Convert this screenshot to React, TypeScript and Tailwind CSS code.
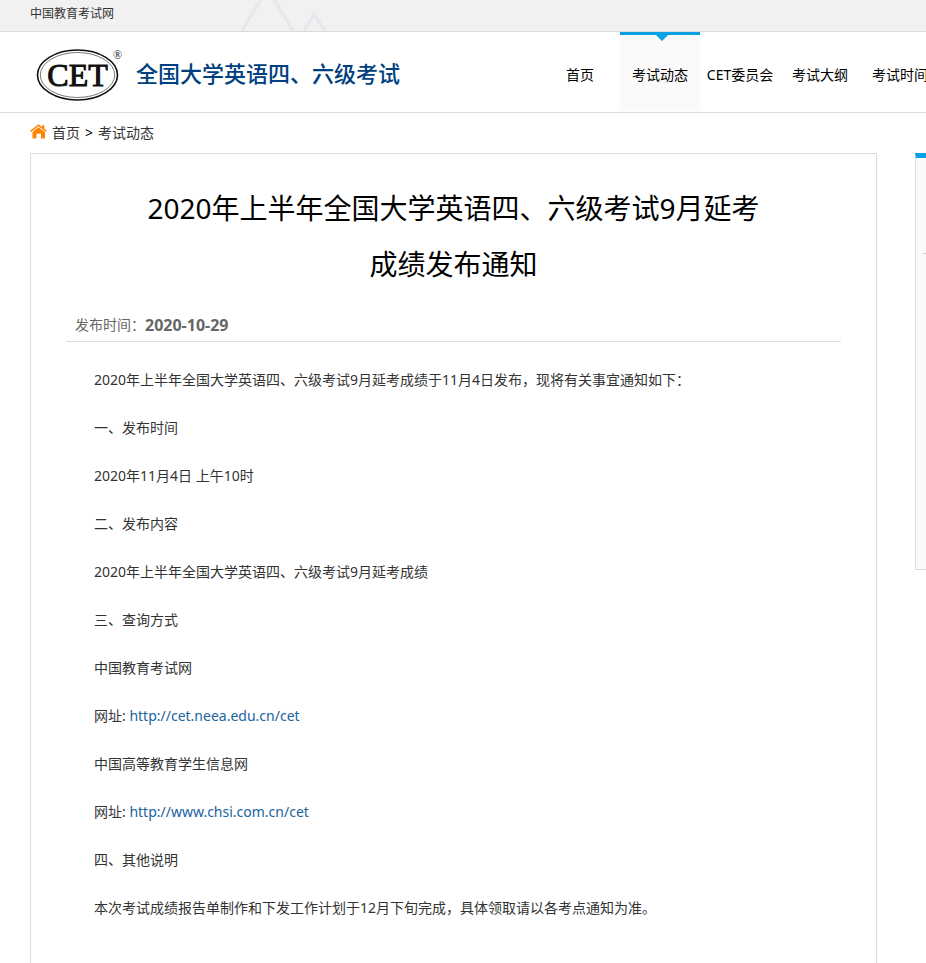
import clsx from 'clsx'

interface NavItem {
  label: string
  active?: boolean
}

interface Paragraph {
  text: string
  link?: string
}

const NAV_ITEMS: NavItem[] = [
  { label: '首页' },
  { label: '考试动态', active: true },
  { label: 'CET委员会' },
  { label: '考试大纲' },
  { label: '考试时间' },
]

const PARAGRAPHS: Paragraph[] = [
  {
    text: '2020年上半年全国大学英语四、六级考试9月延考成绩于11月4日发布，现将有关事宜通知如下：',
  },
  { text: '一、发布时间' },
  { text: '2020年11月4日 上午10时' },
  { text: '二、发布内容' },
  { text: '2020年上半年全国大学英语四、六级考试9月延考成绩' },
  { text: '三、查询方式' },
  { text: '中国教育考试网' },
  { text: '网址: ', link: 'http://cet.neea.edu.cn/cet' },
  { text: '中国高等教育学生信息网' },
  { text: '网址: ', link: 'http://www.chsi.com.cn/cet' },
  { text: '四、其他说明' },
  {
    text: '本次考试成绩报告单制作和下发工作计划于12月下旬完成，具体领取请以各考点通知为准。',
  },
]

function CetLogo() {
  return (
    <svg width="90" height="56" viewBox="0 0 90 56" role="img" aria-label="CET">
      <ellipse cx="41.5" cy="29" rx="40" ry="25" fill="#fff" stroke="#111" strokeWidth="1.6" />
      <ellipse cx="41.5" cy="29" rx="37.2" ry="22.5" fill="none" stroke="#555" strokeWidth="0.8" />
      <text
        x="41.5"
        y="39.5"
        textAnchor="middle"
        fontSize="32"
        fill="#111"
        stroke="#111"
        strokeWidth="1"
        className="font-['Liberation_Serif',serif]"
      >
        CET
      </text>
      <text
        x="81.5"
        y="13"
        textAnchor="middle"
        fontSize="12"
        fill="#222"
        className="font-['Liberation_Serif',serif]"
      >
        ®
      </text>
    </svg>
  )
}

function HomeIcon() {
  return (
    <svg width="17" height="18" viewBox="0 0 17 18" aria-hidden="true">
      <path d="M0.6 7.4 8.5 1.1 16.4 7.4" fill="none" stroke="#ff8400" strokeWidth="1.5" />
      <path d="M12 1.2h2.3v4L12 3.2z" fill="#ff8400" />
      <path d="M8.5 3.2 15 8.2v6.3h-4V9.7H6.5v4.8h-4V8z" fill="#ff8400" />
    </svg>
  )
}

function TopBar() {
  return (
    <div className="flex h-8 items-start border-b border-[#dcdcdc] bg-[#f1f1f1] pl-[30px]">
      <a href="#" className="w-[212px] text-xs leading-[27px]">
        中国教育考试网
      </a>
      <svg width="90" height="31" viewBox="0 0 90 31" aria-hidden="true">
        <path
          d="M0 31 19-1M32-1 51 31M62 31 72 14 83 31"
          fill="none"
          stroke="#e5e7ee"
          strokeWidth="3"
        />
      </svg>
    </div>
  )
}

function Header() {
  return (
    <header className="flex h-[81px] justify-between border-b border-[#dcdcdc] pl-9">
      <a href="#" className="flex shrink-0 items-center gap-[10px] pt-1">
        <CetLogo />
        <span className="text-[22px] font-medium text-[#003f80]">
          全国大学英语四、六级考试
        </span>
      </a>
      {/* The last item runs past the right edge of the window */}
      <nav className="-mr-[14px] flex shrink-0">
        {NAV_ITEMS.map(({ label, active }) => (
          <a
            key={label}
            href="#"
            className={clsx(
              'relative h-[79px] w-20 text-center leading-[86px] whitespace-nowrap text-black',
              active && 'bg-[#fafafa]',
            )}
          >
            {active && (
              <svg
                className="absolute top-0 left-0"
                width="80"
                height="9"
                viewBox="0 0 80 9"
                aria-hidden="true"
              >
                <path d="M0 0h80v3H48l-6 6-6-6H0z" fill="#0ba2e5" />
              </svg>
            )}
            {label}
          </a>
        ))}
      </nav>
    </header>
  )
}

function Article() {
  return (
    <article className="min-w-0 flex-1 border border-[#dcdcdc] px-[35px] pt-[26px] pb-20">
      <h1 className="text-center text-[28px] leading-[56px] font-normal text-black">
        2020年上半年全国大学英语四、六级考试9月延考
        <br />
        成绩发布通知
      </h1>
      <div className="mt-[17px] flex h-[33px] items-center border-b border-[#dcdcdc] pl-[9px] text-[#666]">
        发布时间：
        <strong className="text-base leading-8 font-bold">2020-10-29</strong>
      </div>
      <div className="mt-[14px]">
        {PARAGRAPHS.map(({ text, link }, i) => (
          <p key={i} className="pl-7 leading-[48px]">
            {text}
            {link && (
              <a href={link} className="text-[#2064a0]">
                {link}
              </a>
            )}
          </p>
        ))}
      </div>
    </article>
  )
}

export default function App() {
  return (
    <div className="min-h-screen overflow-x-hidden bg-white font-['Noto_Sans','Noto_Sans_CJK_SC',sans-serif] text-sm text-[#333]">
      <TopBar />
      <Header />
      <div className="flex h-10 items-center gap-[5px] pl-[30px]">
        <HomeIcon />
        <a href="#">首页</a>
        <span className="text-black">&gt;</span>
        <a href="#">考试动态</a>
      </div>
      {/* Sidebar starts at the edge of the window and continues outside it */}
      <main className="-mr-[274px] flex items-start gap-[38px] pl-[30px]">
        <Article />
        <aside className="h-[417px] w-[285px] shrink-0 border border-t-[5px] border-[#dcdcdc] border-t-[#0ba2e5] bg-[#fafafa] pl-[7px]">
          <div className="h-[96px] border-b border-[#ccc]" />
        </aside>
      </main>
    </div>
  )
}
